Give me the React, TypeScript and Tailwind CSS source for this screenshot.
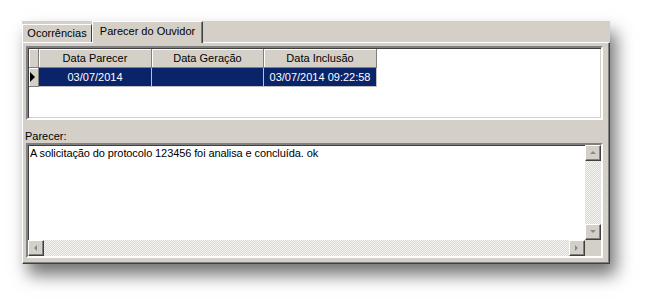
import React from 'react';

const font = "font-['Liberation_Sans',Arial,sans-serif]";
const raised =
  'bg-[#d4d0c8] border border-t-white border-l-white border-r-[#404040] border-b-[#404040] shadow-[inset_-1px_-1px_0_#808080]';
const track = 'bg-[repeating-conic-gradient(#dcd9d3_0_25%,#f4f3f0_0_50%)] bg-[length:2px_2px]';

type Dir = 'up' | 'down' | 'left' | 'right';

const arrows: Record<Dir, string> = {
  up: '1,5 4,2 7,5',
  down: '1,2 4,5 7,2',
  left: '5,1 2,4 5,7',
  right: '2,1 5,4 2,7',
};

function ScrollButton({ dir }: { dir: Dir }) {
  return (
    <div className={`w-[16px] h-[16px] shrink-0 flex items-center justify-center ${raised}`}>
      <svg width="8" height="8" viewBox="0 0 8 8">
        <polygon points={arrows[dir]} fill="#8a8a8a" />
      </svg>
    </div>
  );
}

const columns = [
  { title: 'Data Parecer', value: '03/07/2014', width: 'w-[113px]' },
  { title: 'Data Geração', value: '', width: 'w-[112px]' },
  { title: 'Data Inclusão', value: '03/07/2014 09:22:58', width: 'w-[113px]' },
];

export default function App() {
  return (
    <div className={`w-[652px] h-[307px] bg-white pt-[21px] pl-[22px] text-[11px] leading-[13px] text-black ${font}`}>
      <div className="w-[588px] h-[243px] bg-[#d4d0c8] shadow-[6px_11px_16px_rgba(0,0,0,0.55)] flex flex-col">
        {/* tabs */}
        <div className="h-[21px] flex items-end">
          <div className="h-[18px] w-[70px] border-t border-l border-r border-t-white border-l-white border-r-[#404040] flex items-center justify-center">
            Ocorrências
          </div>
          <div className="relative z-10 h-[22px] -mb-px w-[111px] bg-[#d4d0c8] border-t border-l border-r border-t-white border-l-white border-r-[#404040] shadow-[inset_-1px_0_0_#808080] flex items-center justify-center pb-[2px]">
            Parecer do Ouvidor
          </div>
        </div>

        {/* page */}
        <div className="flex-1 border border-t-white border-l-white border-r-[#404040] border-b-[#404040] shadow-[inset_-1px_-1px_0_#808080] pl-[2px] pt-[3px] flex flex-col">
          {/* grid */}
          <div className="ml-[1px] w-[577px] h-[74px] bg-white border-2 border-t-[#808080] border-l-[#808080] border-r-white border-b-white shadow-[inset_1px_1px_0_#404040,inset_-1px_-1px_0_#d4d0c8] p-px flex flex-col">
            <div className="flex h-[19px]">
              <div className="w-[10px] h-[19px] bg-[#d4d0c8] border-r border-b border-[#808080] shadow-[inset_1px_1px_0_#fff]" />
              {columns.map((c) => (
                <div
                  key={c.title}
                  className={`${c.width} h-[19px] bg-[#d4d0c8] border-r border-b border-[#808080] shadow-[inset_1px_1px_0_#fff] flex items-center justify-center`}
                >
                  {c.title}
                </div>
              ))}
            </div>
            <div className="flex h-[19px]">
              <div className="w-[10px] h-[19px] bg-[#d4d0c8] border-r border-b border-[#808080] shadow-[inset_1px_1px_0_#fff] flex items-center pl-[1px]">
                <svg width="6" height="10" viewBox="0 0 6 10">
                  <polygon points="0,0 5,5 0,10" fill="#000" />
                </svg>
              </div>
              {columns.map((c) => (
                <div
                  key={c.title}
                  className={`${c.width} h-[19px] bg-[#0a246a] text-white border-r border-b border-[#c0c0c0] flex items-center justify-center`}
                >
                  {c.value}
                </div>
              ))}
            </div>
          </div>

          {/* label */}
          <div className="h-[23px] pt-[10px]">Parecer:</div>

          {/* memo */}
          <div className="ml-[1px] w-[577px] h-[115px] bg-white border-2 border-t-[#808080] border-l-[#808080] border-r-white border-b-white shadow-[inset_1px_1px_0_#404040,inset_-1px_-1px_0_#d4d0c8] flex flex-col">
            <div className="flex-1 flex min-h-0">
              <div className="flex-1 pl-[2px] pt-[2px] whitespace-nowrap overflow-hidden tracking-[-0.1px]">
                A solicitação do protocolo 123456 foi analisa e concluída. ok
              </div>
              <div className="w-[16px] flex flex-col">
                <ScrollButton dir="up" />
                <div className={`flex-1 ${track}`} />
                <ScrollButton dir="down" />
              </div>
            </div>
            <div className="h-[16px] flex">
              <ScrollButton dir="left" />
              <div className={`flex-1 ${track}`} />
              <ScrollButton dir="right" />
              <div className="w-[16px] h-[16px] bg-[#d4d0c8]" />
            </div>
          </div>
        </div>
      </div>
    </div>
  );
}
